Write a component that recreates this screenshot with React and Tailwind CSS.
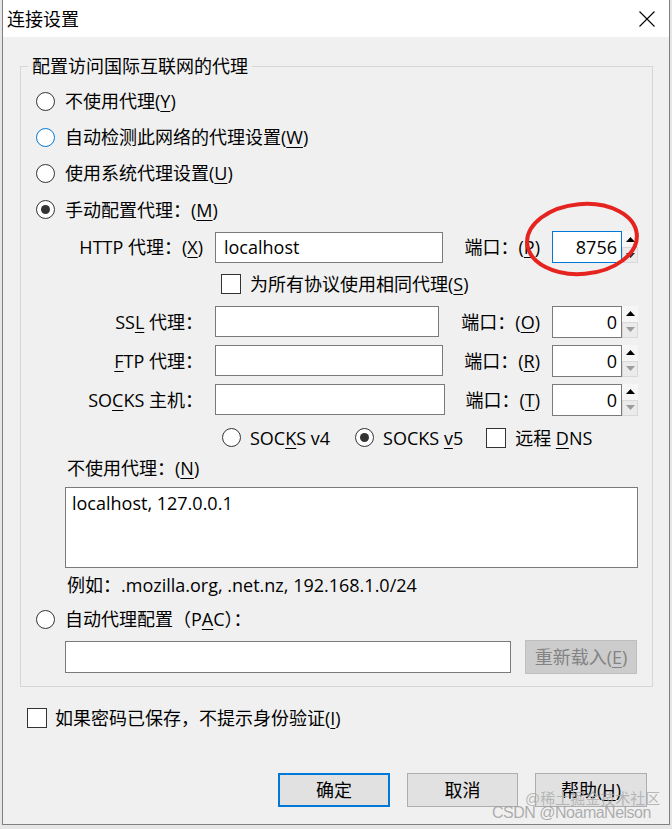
import React from "react";

const U = ({ children }) => (
  <span className="underline decoration-1 underline-offset-[3px]">{children}</span>
);

function Radio({ checked, hover }) {
  return (
    <span
      className={
        "w-[19px] h-[19px] shrink-0 rounded-full border bg-white flex items-center justify-center " +
        (hover ? "border-[#0078d7]" : "border-[#333333]")
      }
    >
      {checked ? <span className="w-[9px] h-[9px] rounded-full bg-[#333333]" /> : null}
    </span>
  );
}

function Check() {
  return <span className="w-[20px] h-[20px] shrink-0 border border-[#333333] bg-white" />;
}

function Spin({ downDark }) {
  return (
    <div className="flex flex-col w-[16px] h-[32px]">
      <div className="h-[16px] flex items-center justify-center bg-[#f6f6f6]">
        <svg width="9" height="5" viewBox="0 0 9 5">
          <path d="M0 5 L4.5 0 L9 5Z" fill="#000" />
        </svg>
      </div>
      <div className="h-[16px] flex items-center justify-center bg-[#ebebeb] border border-[#d8d8d8]">
        <svg width="9" height="5" viewBox="0 0 9 5">
          <path d="M0 0 L4.5 5 L9 0Z" fill={downDark ? "#222" : "#9c9c9c"} />
        </svg>
      </div>
    </div>
  );
}

function Port({ value, focused }) {
  return (
    <div className="flex items-center ml-[12px]">
      <div
        className={
          "w-[70px] h-[32px] bg-white border flex items-center justify-end pr-[4px] " +
          (focused ? "border-[#0078d7]" : "border-[#7a7a7a]")
        }
      >
        {value}
      </div>
      <Spin downDark={focused} />
    </div>
  );
}

function RadioRow({ h, checked, hover, children }) {
  return (
    <div className={"flex items-center " + h}>
      <Radio checked={checked} hover={hover} />
      <span className="ml-[10px] whitespace-nowrap">{children}</span>
    </div>
  );
}

function ProxyRow({ label, inputW, portLabel, port, focused, text, h }) {
  return (
    <div className={"flex items-center " + h}>
      <div className="w-[167px] text-right whitespace-nowrap">{label}</div>
      <div
        className={
          "ml-[12px] h-[31px] bg-white border border-[#7a7a7a] flex items-center pl-[8px] " + inputW
        }
      >
        {text}
      </div>
      <div className="flex-1 text-right whitespace-nowrap">{portLabel}</div>
      <Port value={port} focused={focused} />
    </div>
  );
}

export default function App() {
  return (
    <div className="relative w-[672px] h-[829px] overflow-hidden bg-[#e6e6e6] font-['Open_Sans','Noto_Sans_CJK_SC',sans-serif] text-[18px] leading-[24px] text-black">
      <div className="ml-[2px] w-[668px] h-[825px] bg-[#f0f0f0] border-l border-r border-b border-[#808080] flex flex-col">
        {/* title bar */}
        <div className="h-[37px] bg-white flex items-center justify-between pl-[4px] pr-[14px]">
          <span>连接设置</span>
          <svg width="16" height="16" viewBox="0 0 16 16">
            <path d="M0.5 0.5 L15.5 15.5 M15.5 0.5 L0.5 15.5" stroke="#000" strokeWidth="1.1" />
          </svg>
        </div>

        <fieldset className="mt-[17px] ml-[17px] w-[630px] border border-[#d6d6d6] p-0">
          <legend className="ml-[7px] px-[4px] leading-[24px]">配置访问国际互联网的代理</legend>
          <div className="pl-[15px] pr-[14px] pt-[5px] pb-[8px] flex flex-col">
            <RadioRow h="h-[36px]">
              不使用代理(<U>Y</U>)
            </RadioRow>
            <RadioRow h="h-[36px]" hover>
              自动检测此网络的代理设置(<U>W</U>)
            </RadioRow>
            <RadioRow h="h-[36px]">
              使用系统代理设置(<U>U</U>)
            </RadioRow>
            <RadioRow h="h-[37px]" checked>
              手动配置代理：(<U>M</U>)
            </RadioRow>

            <ProxyRow
              h="h-[38px]"
              label={
                <>
                  HTTP 代理：(<U>X</U>)
                </>
              }
              inputW="w-[228px]"
              text="localhost"
              portLabel={
                <>
                  端口：(<U>P</U>)
                </>
              }
              port="8756"
              focused
            />

            <div className="flex items-center h-[36px] pl-[185px]">
              <Check />
              <span className="ml-[9px] whitespace-nowrap">
                为所有协议使用相同代理(<U>S</U>)
              </span>
            </div>

            <ProxyRow
              h="h-[39px]"
              label={
                <>
                  SS<U>L</U> 代理：
                </>
              }
              inputW="w-[224px]"
              portLabel={
                <>
                  端口：(<U>O</U>)
                </>
              }
              port="0"
            />
            <ProxyRow
              h="h-[39px]"
              label={
                <>
                  <U>F</U>TP 代理：
                </>
              }
              inputW="w-[228px]"
              portLabel={
                <>
                  端口：(<U>R</U>)
                </>
              }
              port="0"
            />
            <ProxyRow
              h="h-[39px]"
              label={
                <>
                  SO<U>C</U>KS 主机：
                </>
              }
              inputW="w-[230px]"
              portLabel={
                <>
                  端口：(<U>T</U>)
                </>
              }
              port="0"
            />

            <div className="flex items-center h-[37px] pl-[186px] whitespace-nowrap">
              <Radio />
              <span className="ml-[9px]">
                SOC<U>K</U>S v4
              </span>
              <span className="ml-[25px]">
                <Radio checked />
              </span>
              <span className="ml-[9px]">
                SOCKS <U>v</U>5
              </span>
              <span className="ml-[23px] flex">
                <Check />
              </span>
              <span className="ml-[9px]">
                远程 <U>D</U>NS
              </span>
            </div>

            <div className="h-[24px] pl-[31px] whitespace-nowrap">
              不使用代理：(<U>N</U>)
            </div>
            <div className="mt-[7px] ml-[29px] w-[573px] h-[81px] bg-white border border-[#7a7a7a] pl-[6px] pt-[3px]">
              localhost, 127.0.0.1
            </div>
            <div className="h-[34px] flex items-center pl-[31px] whitespace-nowrap">
              例如：.mozilla.org, .net.nz, 192.168.1.0/24
            </div>
            <RadioRow h="h-[34px]">
              自动代理配置（P<U>A</U>C）：
            </RadioRow>
            <div className="h-[42px] flex items-center pl-[29px]">
              <div className="w-[446px] h-[32px] bg-white border border-[#7a7a7a]" />
              <div className="ml-[14px] w-[112px] h-[34px] bg-[#cccccc] border border-[#bfbfbf] text-[#838383] flex items-center justify-center whitespace-nowrap">
                重新载入(<U>E</U>)
              </div>
            </div>
          </div>
        </fieldset>

        <div className="mt-[20px] h-[22px] flex items-center pl-[24px]">
          <Check />
          <span className="ml-[8px] whitespace-nowrap">
            如果密码已保存，不提示身份验证(<U>I</U>)
          </span>
        </div>

        <div className="mt-[44px] flex justify-end pr-[22px] gap-[17px]">
          <div className="w-[112px] h-[34px] bg-[#e1e1e1] border-2 border-[#0078d7] flex items-center justify-center">
            确定
          </div>
          <div className="w-[111px] h-[34px] bg-[#e1e1e1] border border-[#adadad] flex items-center justify-center">
            取消
          </div>
          <div className="w-[112px] h-[34px] bg-[#e1e1e1] border border-[#adadad] flex items-center justify-center">
            帮助(<U>H</U>)
          </div>
        </div>
      </div>

      {/* red annotation ellipse */}
      <svg className="absolute left-[520px] top-[196px]" width="125" height="86" viewBox="0 0 125 86">
        <ellipse
          cx="62"
          cy="43"
          rx="55"
          ry="35"
          fill="none"
          stroke="#e5231f"
          strokeWidth="4"
          transform="rotate(-5 62 43)"
        />
      </svg>

      {/* watermark */}
      <div className="absolute left-[525px] top-[789px] font-['Liberation_Sans','Noto_Sans_CJK_SC',sans-serif] text-[15px] leading-[20px] text-[#a9a9a9]/80 whitespace-nowrap">
        @稀土掘金技术社区
      </div>
      <div className="absolute left-[492px] top-[803px] font-['Liberation_Sans',sans-serif] text-[16px] tracking-[-0.5px] leading-[20px] text-[#a0a0a0]/85 whitespace-nowrap">
        CSDN @NoamaNelson
      </div>
    </div>
  );
}
